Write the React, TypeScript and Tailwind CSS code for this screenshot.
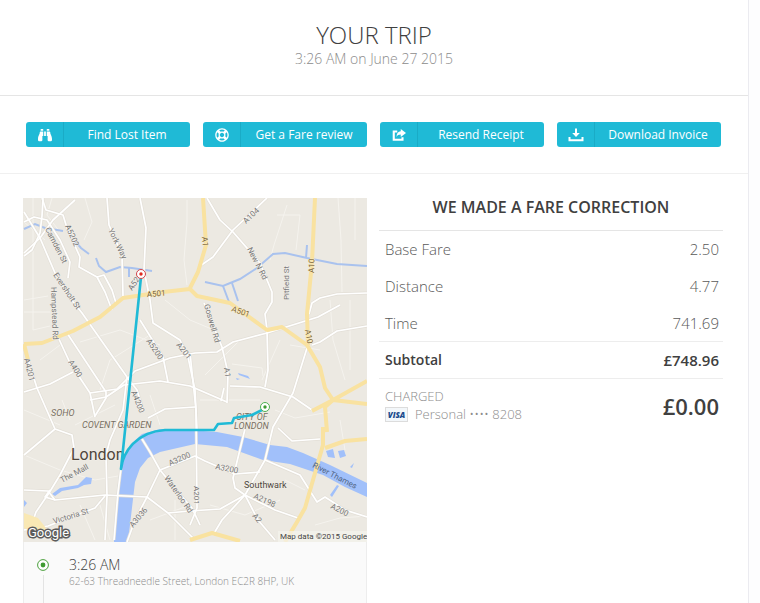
import { FaBinoculars, FaRegLifeRing } from "react-icons/fa";

const ResendIcon = () => (
  <svg className="w-3.5 h-3.5" viewBox="0 0 16 16" fill="none">
    <path d="M6 4H2V13.500H12V10.500" stroke="white" strokeWidth="2.4" />
    <path d="M10 1l6 4.600L10 10.200V7.500C7.600 7.500 6.200 8.300 5.200 10.200C5.200 6.400 7 4 10 3.800Z" fill="white" />
  </svg>
);

const DownloadIcon = () => (
  <svg className="w-4 h-4" viewBox="0 0 16 16" fill="none">
    <path d="M7 1.500h2v4.500h2.800L8 10 4.200 6H7Z" fill="white" />
    <path d="M1.500 10V13.200H14.500V10" stroke="white" strokeWidth="2" />
  </svg>
);

const actions = [
  { label: "Find Lost Item", icon: <FaBinoculars className="w-4 h-3.5" /> },
  { label: "Get a Fare review", icon: <FaRegLifeRing className="w-3.5 h-3.5" /> },
  { label: "Resend Receipt", icon: <ResendIcon /> },
  { label: "Download Invoice", icon: <DownloadIcon /> },
];

const fares = [
  { name: "Base Fare", value: "2.50" },
  { name: "Distance", value: "4.77" },
  { name: "Time", value: "741.69" },
];

const minorRoads = [
  "M52 198L47 215 60 232M24 222L45 240M85 198L92 222 84 240M187 200V222L184 260 187 285",
  "M287 205L274 245 270 260M300 215L296 250M277 215H300M338 198L341 240 342 292M355 198V240",
  "M24 312H50M33 198V330M33 330L50 326M24 300L48 296M330 300L333 340 345 380M350 300V370",
  "M60 345L40 360M80 342L120 330 160 345M100 390L110 360 150 335M165 300L190 320 214 330",
  "M232 364L262 368 263 376M280 340L262 380M205 375L240 340M290 345L320 350M200 400H260",
  "M275 410L295 418 330 412M75 425L115 405M62 400L70 420M150 395L160 425M24 410L60 425",
  "M60 470L95 480 118 476M24 455L60 470M80 505L95 540M175 500V540M210 505L245 515 280 500",
  "M315 525L340 518 367 516M285 480L305 490M150 520L190 505M340 420L345 450M100 505L110 540",
];

const roads = [
  "M43 198L42 216 40 233 32 250 24 256",
  "M75 200L53 220 40 238 24 253",
  "M24 212L40 238 55 273 70 298 82 313 127 377",
  "M24 222L34 217 47 220 60 240 70 262 68 278",
  "M42 198L46 210 63 215 67 228 80 257 79 267 97 277 105 292 112 310",
  "M97 277L104 275 112 290 116 303",
  "M107 198L109 225 122 255 123 296",
  "M140 198L146 228 144 270 150 300 153 323 180 340 188 357 195 390 197 430",
  "M207 198L220 220 233 232 260 263 272 292 272 302 265 314 267 330 268 370 265 387",
  "M267 198L233 230 213 257 200 266",
  "M309 314L312 303 320 298 337 294 367 293",
  "M58 337L70 363 90 393 95 417",
  "M24 347L37 388 55 429 72 435 74 448",
  "M24 392L50 384 73 372",
  "M67 333L106 392 106 398 95 416",
  "M90 393L117 389 135 371 170 358 195 353 217 352 233 342 267 333 318 317 340 305",
  "M90 400L106 397 124 385 160 381 190 386 227 402",
  "M140 320L163 357 168 382",
  "M127 377L137 390 143 410M127 377L123 410 110 440 106 455 107 496 105 540",
  "M148 418L165 409 195 407",
  "M204 303L222 347 228 373 227 403",
  "M190 353L196 410 197 508 190 525",
  "M230 386L260 387 293 397 312 410",
  "M221 401L224 388",
  "M307 348L293 393 273 427 265 460 245 495 222 520 213 535",
  "M312 345L320 342 337 331 367 326",
  "M24 455L55 429M74 448L60 475 49 493 36 512 28 535",
  "M24 490L48 491 55 500 105 495 147 497 168 513 195 540",
  "M55 500L45 497 50 490",
  "M105 496L95 508 48 526 24 530",
  "M142 439L150 452 160 470 147 497 135 520 127 542",
  "M160 470L195 456 205 461 235 474 260 472",
  "M160 470L178 492 192 508 200 525",
  "M168 513L190 511 220 509 245 495",
  "M245 429L243 437 233 478 235 488 245 495 258 520 275 540",
  "M245 495L275 510 298 518",
  "M265 460L300 475 317 502 325 497 345 510 367 517",
  "M278 428L292 441 320 439",
  "M114 540L118 492 121 468",
];

const highways = [
  "M24 344L42 343 73 331 100 317 123 298 163 292 190 289 197 296 230 303 267 330 282 327 307 345 320 367 325 388 333 400",
  "M190 288L198 272 206 245 203 198",
  "M315 198L312 262 307 314 308 345",
  "M24 344L28 360",
  "M367 381L333 400 312 411M333 400L367 404M333 400L325 407 327 432",
  "M323 427L323 445 305 508 297 522 285 542",
  "M325 448L345 441 367 439",
  "M190 540L212 533 240 541",
];

const canals = [
  "M24 229L35 224 45 228 63 231",
  "M75 241L81 248 89 254",
  "M96 258L99 266 106 272 120 267 132 268 152 271",
  "M129 268V277",
  "M205 282L223 286 240 279 257 268 273 254 285 253 307 258 337 264 367 266",
  "M307 245L306 258M223 286L229 302M232 283L238 301",
];

const streets = [
  { t: "Camden St", x: 45, y: 229, r: 63 },
  { t: "A5202", x: 65, y: 226, r: 66 },
  { t: "York Way", x: 108, y: 230, r: 64 },
  { t: "Eversholt St", x: 53, y: 275, r: 56 },
  { t: "Hampstead Rd", x: 51, y: 287, r: 88 },
  { t: "A5203", x: 132, y: 291, r: -55 },
  { t: "A5200", x: 146, y: 341, r: 56 },
  { t: "A201", x: 176, y: 345, r: 52 },
  { t: "A400", x: 68, y: 362, r: 58 },
  { t: "A4201", x: 24, y: 359, r: 76 },
  { t: "A4200", x: 131, y: 392, r: 68 },
  { t: "A104", x: 246, y: 224, r: -43 },
  { t: "New N Rd", x: 247, y: 249, r: 63 },
  { t: "Pitfield St", x: 289, y: 300, r: -90 },
  { t: "Goswell Rd", x: 204, y: 305, r: 74 },
  { t: "A1", x: 224, y: 368, r: 82 },
  { t: "The Mall", x: 62, y: 483, r: -28 },
  { t: "Victoria St", x: 54, y: 524, r: -17 },
  { t: "Waterloo Rd", x: 164, y: 478, r: 55 },
  { t: "A3036", x: 133, y: 528, r: -50 },
  { t: "A3200", x: 170, y: 466, r: -24 },
  { t: "A3200", x: 215, y: 469, r: 11 },
  { t: "A201", x: 194, y: 486, r: 90 },
  { t: "A2198", x: 253, y: 498, r: 24 },
  { t: "A2", x: 252, y: 516, r: 52 },
  { t: "A200", x: 330, y: 508, r: 27 },
];

const highwayLabels = [
  { t: "A1", x: 202, y: 237, r: 85 },
  { t: "A10", x: 314, y: 273, r: -88 },
  { t: "A501", x: 147, y: 297, r: -4 },
  { t: "A501", x: 231, y: 311, r: 20 },
  { t: "A10", x: 305, y: 330, r: 80 },
];

const TripMap = () => (
  <svg
    className="block w-full"
    viewBox="23 198 344 344"
    role="img"
    aria-label="Trip map"
    fontFamily="Roboto, sans-serif"
  >
    <rect x="23" y="198" width="344" height="344" fill="#ece9e2" />

    <g fill="none" stroke="#f5f3ee" strokeWidth="1">
      {minorRoads.map((d) => (
        <path key={d} d={d} />
      ))}
    </g>

    {/* Water */}
    <path
      d="M114 542L117 492 120 468 130 445 142 434 160 429 190 430 217 432 243 437 270 445 287 447 303 453 330 465 367 483V497L345 487 323 475 290 464 263 460 227 447 195 444 160 452 148 458 140 468 135 482 128 542Z"
      fill="#a1c0fa"
    />
    <path d="M52 494L60 488 78 485 86 477 92 478 91 484 84 485 78 488 62 491 55 496Z" fill="#a1c0fa" />
    <path d="M326 451L333 449 335 458 328 457ZM338 451L344 450 346 456 340 458ZM350 467L354 463 352 468ZM330 495L337 485 339 486 332 497Z" fill="#a1c0fa" />
    <path d="M24 500L27 503 24 507ZM238 373L248 376 250 379 239 375ZM236 378L240 379 237 380Z" fill="#a1c0fa" />
    <g fill="none" stroke="#a9c2ee" strokeWidth="2">
      {canals.map((d) => (
        <path key={d} d={d} />
      ))}
    </g>

    <g fill="none" stroke="#e3dfd7" strokeWidth="3" strokeLinejoin="round">
      {roads.map((d) => (
        <path key={d} d={d} />
      ))}
    </g>
    <g fill="none" stroke="#ffffff" strokeWidth="1.7" strokeLinejoin="round">
      {roads.map((d) => (
        <path key={d} d={d} />
      ))}
    </g>
    <path d="M24 513L38 518 46 528 40 536 24 528Z" fill="#f9e8b4" />
    <g fill="none" stroke="#f9e2a0" strokeWidth="4" strokeLinejoin="round">
      {highways.map((d) => (
        <path key={d} d={d} />
      ))}
    </g>

    {/* Labels */}
    <g fontSize="8" fill="#777777" stroke="#f3f0ea" strokeWidth="1" paintOrder="stroke">
      {streets.map((s) => (
        <text key={s.t + s.x} transform={`translate(${s.x} ${s.y}) rotate(${s.r})`}>
          {s.t}
        </text>
      ))}
    </g>
    <g fontSize="8" fill="#7b6436" stroke="#faedc4" strokeWidth="1" paintOrder="stroke">
      {highwayLabels.map((s) => (
        <text key={s.t + s.x} transform={`translate(${s.x} ${s.y}) rotate(${s.r})`}>
          {s.t}
        </text>
      ))}
    </g>
    <text fontSize="8" fill="#506485" transform="translate(312 467) rotate(27)">
      River Thames
    </text>
    <g fontSize="9" fill="#766d60" stroke="#f1eee7" strokeWidth="1" paintOrder="stroke">
      <g fontStyle="italic">
        <text x="51" y="416">SOHO</text>
        <text x="82" y="428">COVENT GARDEN</text>
        <text x="236" y="420">CITY OF</text>
        <text x="234" y="429">LONDON</text>
      </g>
      <text x="244" y="488" fill="#4d463d">Southwark</text>
    </g>
    <text x="71" y="460" fontSize="16" fill="#4f463c" stroke="#f3f0ea" strokeWidth="1" paintOrder="stroke">
      London
    </text>

    {/* Route */}
    <path
      d="M141 277L121 469C123 452 136 432 165 430H214L218 424 232 423 234 418 252 415 264 409"
      fill="none"
      stroke="#1fbad6"
      strokeWidth="2.6"
      strokeLinejoin="round"
    />
    <circle cx="141" cy="274" r="4.5" fill="white" stroke="#d0454c" strokeWidth="1" />
    <circle cx="141" cy="274" r="1.7" fill="#e02b20" />
    <circle cx="265" cy="407" r="4.5" fill="white" stroke="#4caf50" strokeWidth="1" />
    <circle cx="265" cy="407" r="1.7" fill="#3f9b32" />

    <text x="28" y="537" fontSize="13" fill="#ffffff" stroke="#5c5c5c" strokeWidth="3" paintOrder="stroke">
      Google
    </text>
    <rect x="278" y="531" width="89" height="11" fill="#f5f3ee" opacity="0.7" />
    <text x="280" y="539" fontSize="8" fill="#444444">
      Map data ©2015 Google
    </text>
  </svg>
);

const App = () => {
  return (
    <div className="bg-[#fdfdfe] font-['Open_Sans',sans-serif] text-[#595959]">
      <main className="mr-[11px] min-h-screen flex flex-col bg-white border-r border-[#ebebf0]">
        {/* Header */}
        <header className="pt-[21px] pb-[27px] flex flex-col items-center border-b border-[#e5e5e5]">
          <h1 className="text-2xl leading-7 font-light text-[#404040]">YOUR TRIP</h1>
          <p className="text-sm leading-[19px] font-light text-[#8c8c8c]">
            3:26 AM on June 27 2015
          </p>
        </header>

        {/* Actions */}
        <nav className="pl-[26px] pr-[27px] py-[26px] grid grid-cols-4 gap-[13px] border-b border-[#f0f0f0]">
          {actions.map((action) => (
            <button
              key={action.label}
              type="button"
              className="h-[25px] flex items-center rounded-[3px] bg-[#1fbad6] text-white text-xs"
            >
              <span className="w-[38px] h-full flex justify-center items-center border-r border-[#1aabc6]">
                {action.icon}
              </span>
              <span className="flex-1 text-center whitespace-nowrap">{action.label}</span>
            </button>
          ))}
        </nav>

        {/* Trip */}
        <div className="flex-1 pl-[23px] pr-[25px] pt-6 grid grid-cols-2 gap-3">
          <section className="flex flex-col">
            <TripMap />
            <div className="flex-1 pl-[13px] pt-[13px] flex gap-5 bg-[#fafafa] border-x border-[#ededed]">
              <div className="flex flex-col items-center pt-1">
                <svg className="w-3 h-3" viewBox="0 0 12 12">
                  <circle cx="6" cy="6" r="5.400" fill="white" stroke="#4a9f3c" />
                  <circle cx="6" cy="6" r="2.400" fill="#3f9b32" />
                </svg>
                <div className="flex-1 mt-1 w-px bg-[#e3e3e3]"></div>
              </div>
              <div>
                <p className="text-sm leading-[19px] font-light text-[#404040]">3:26 AM</p>
                <p className="text-[10px] leading-[14px] font-light text-[#8c8c8c]">
                  62-63 Threadneedle Street, London EC2R 8HP, UK
                </p>
              </div>
            </div>
          </section>

          <section>
            <h2 className="pb-[13px] text-center text-base leading-[19px] font-semibold text-[#404040]">
              WE MADE A FARE CORRECTION
            </h2>
            <table className="w-full text-[15px]">
              <tbody className="border-t border-[#e5e5e5] font-light">
                {fares.map((fare) => (
                  <tr key={fare.name} className="h-[37px]">
                    <th scope="row" className="pl-[6px] text-left font-light">
                      {fare.name}
                    </th>
                    <td className="pr-1 text-right">{fare.value}</td>
                  </tr>
                ))}
              </tbody>
              <tfoot className="border-y border-[#ededed] font-semibold text-[#404040]">
                <tr className="h-[37px]">
                  <th scope="row" className="pl-[6px] text-left text-sm font-semibold">
                    Subtotal
                  </th>
                  <td className="pr-1 text-right">£748.96</td>
                </tr>
              </tfoot>
            </table>
            <div className="pl-[6px] pr-1 pt-2 flex justify-between items-center">
              <div className="font-light text-[#8c8c8c]">
                <p className="text-[13px] leading-[18px]">CHARGED</p>
                <p className="flex items-center gap-[7px] text-[13px] leading-[19px]">
                  <span className="w-[23px] h-[15px] flex justify-center items-center border border-[#dcdcdc] bg-[#f3f7fa] text-[8px] font-extrabold italic text-[#1a4b8c]">
                    VISA
                  </span>
                  Personal •••• 8208
                </p>
              </div>
              <p className="text-[22px] leading-7 font-semibold text-[#404040]">£0.00</p>
            </div>
          </section>
        </div>
      </main>
    </div>
  );
};

export default App;
